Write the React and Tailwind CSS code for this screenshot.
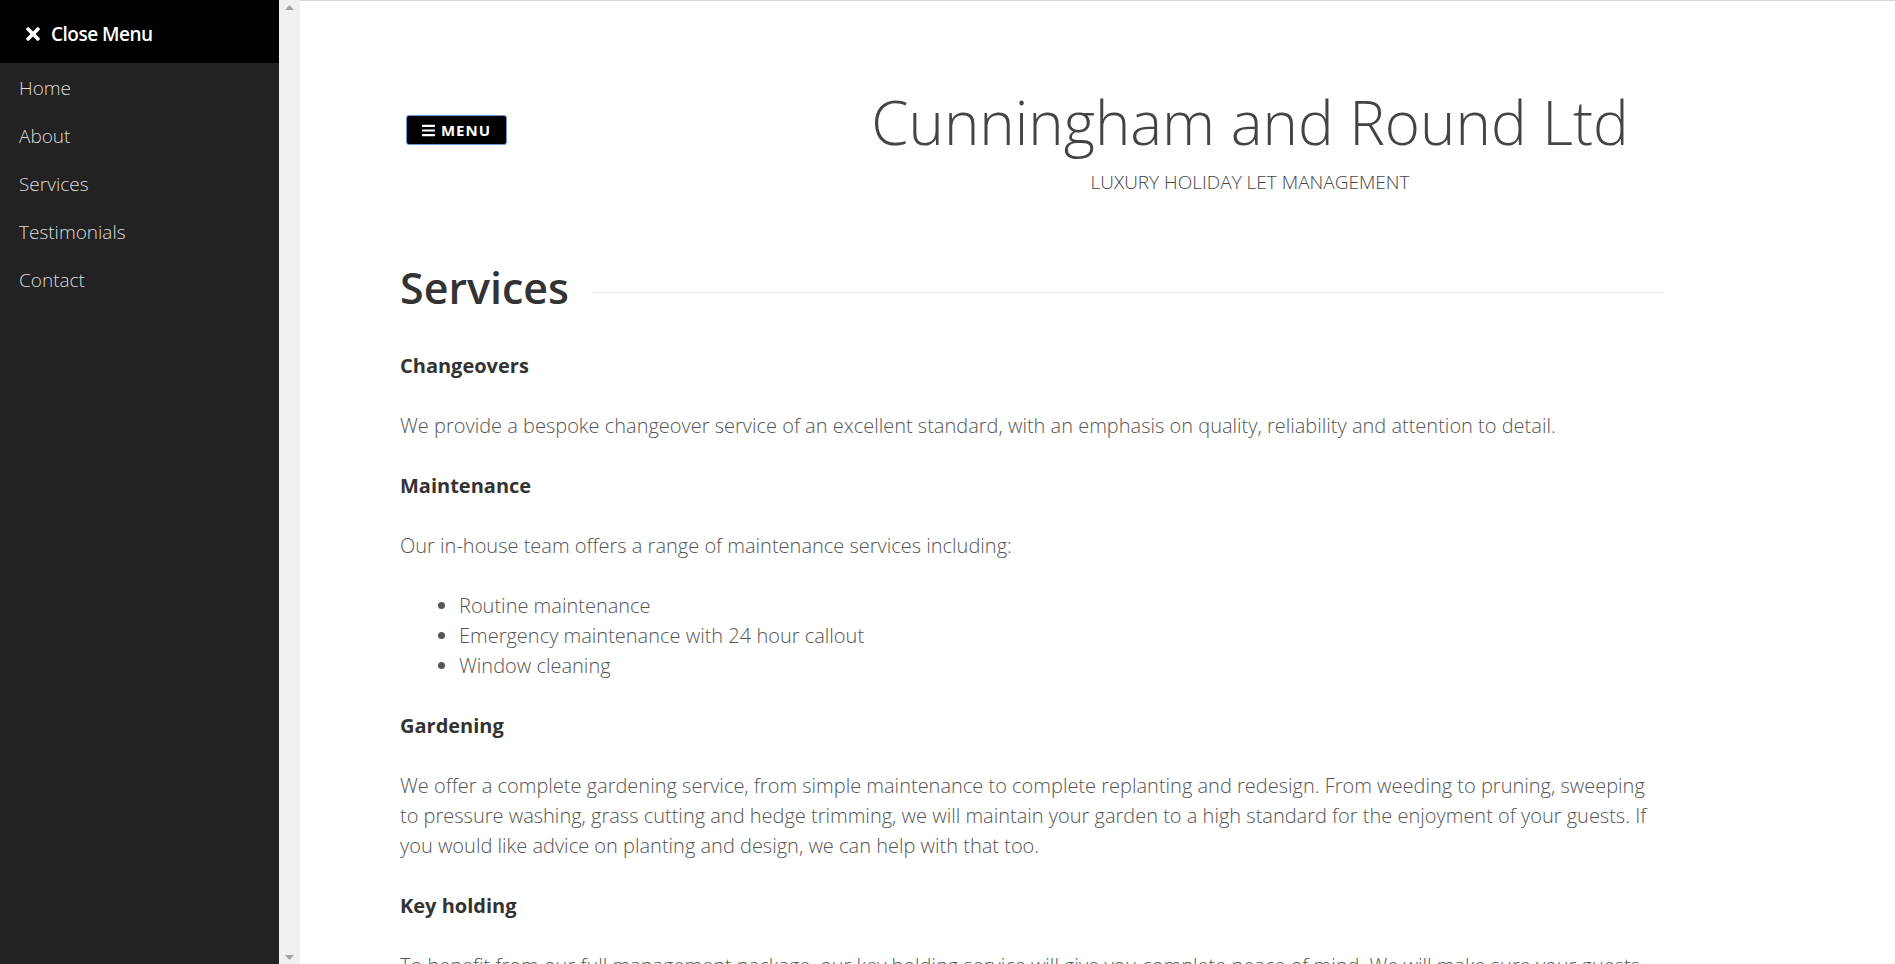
import React from 'react';
import { FaTimes, FaBars } from 'react-icons/fa';

const navItems = ['Home', 'About', 'Services', 'Testimonials', 'Contact'];

// Bloques de contenido de la página de servicios
function Section({ title, children }) {
  return (
    <div className="mt-[30px] first:mt-0">
      <h4 className="text-[20px] leading-[30px] font-bold text-[#333]">{title}</h4>
      <div className="mt-[30px] text-[20px] leading-[30px] font-light text-[#555]">{children}</div>
    </div>
  );
}

export default function App() {
  return (
    <div className="flex h-[964px] w-full overflow-hidden bg-white font-['Open_Sans',sans-serif]">
      {/* Menú lateral */}
      <aside className="flex w-[279px] shrink-0 flex-col bg-[#222]">
        <div className="flex h-[63px] items-center bg-black pl-[26px] pt-[5px] text-[19px] font-semibold text-white">
          <FaTimes className="h-[20px] w-[14px]" />
          <span className="ml-[11px] tracking-[-0.5px]">Close Menu</span>
        </div>
        <nav className="flex flex-col pt-px">
          {navItems.map((item) => (
            <a key={item} href="#" className="flex h-[48px] items-center pl-[19px] text-[19px] font-light text-[#ddd]">
              {item}
            </a>
          ))}
        </nav>
      </aside>

      {/* Barra de desplazamiento */}
      <div className="flex w-[21px] shrink-0 flex-col items-center justify-between bg-[#f0f0f0] pb-[4px] pt-[5px]">
        <svg width="9" height="5" viewBox="0 0 9 5"><polygon points="4.5,0 9,5 0,5" fill="#a3a3a3" /></svg>
        <svg width="9" height="5" viewBox="0 0 9 5"><polygon points="0,0 9,0 4.5,5" fill="#a3a3a3" /></svg>
      </div>

      {/* Contenido principal */}
      <main className="flex-1 overflow-hidden border-t border-[#d6d6d6]">
        <div className="ml-[100px] w-[1262px] pt-[87px]">
          <header className="flex items-start">
            <div className="flex-1 pl-[6px] pt-[27px]">
              <button className="flex h-[30px] w-[101px] items-center justify-center gap-[6px] rounded-[3px] border border-[#6b98d8] bg-black text-[15px] font-bold tracking-[1px] text-white">
                <FaBars className="h-[15px] w-[13px]" />
                MENU
              </button>
            </div>
            <div className="w-[824px] text-center">
              <h1 className="text-[60px] leading-[69px] font-light text-[#444]">Cunningham and Round Ltd</h1>
              <p className="mt-[12px] text-[19px] leading-[27px] font-light uppercase text-[#444]">
                Luxury Holiday Let Management
              </p>
            </div>
          </header>

          <div className="mt-[65px] flex items-center">
            <h2 className="text-[43px] leading-[53px] font-semibold text-[#333]">Services</h2>
            <div className="ml-[25px] mt-[9px] h-px flex-1 bg-[#e5e5e5]" />
          </div>

          <div className="mt-[37px]">
            <Section title="Changeovers">
              <p>
                We provide a bespoke changeover service of an excellent standard, with an emphasis on quality,
                reliability and attention to detail.
              </p>
            </Section>
            <Section title="Maintenance">
              <p>Our in-house team offers a range of maintenance services including:</p>
              <ul className="mt-[30px] list-disc pl-[59px]">
                <li>Routine maintenance</li>
                <li>Emergency maintenance with 24 hour callout</li>
                <li>Window cleaning</li>
              </ul>
            </Section>
            <Section title="Gardening">
              <p>
                We offer a complete gardening service, from simple maintenance to complete replanting and redesign.
                From weeding to pruning, sweeping to pressure washing, grass cutting and hedge trimming, we will
                maintain your garden to a high standard for the enjoyment of your guests. If you would like advice on
                planting and design, we can help with that too.
              </p>
            </Section>
            <Section title="Key holding">
              <p>
                To benefit from our full management package, our key holding service will give you complete peace of
                mind. We will make sure your guests have access to the property whenever they need it.
              </p>
            </Section>
          </div>
        </div>
      </main>
    </div>
  );
}
